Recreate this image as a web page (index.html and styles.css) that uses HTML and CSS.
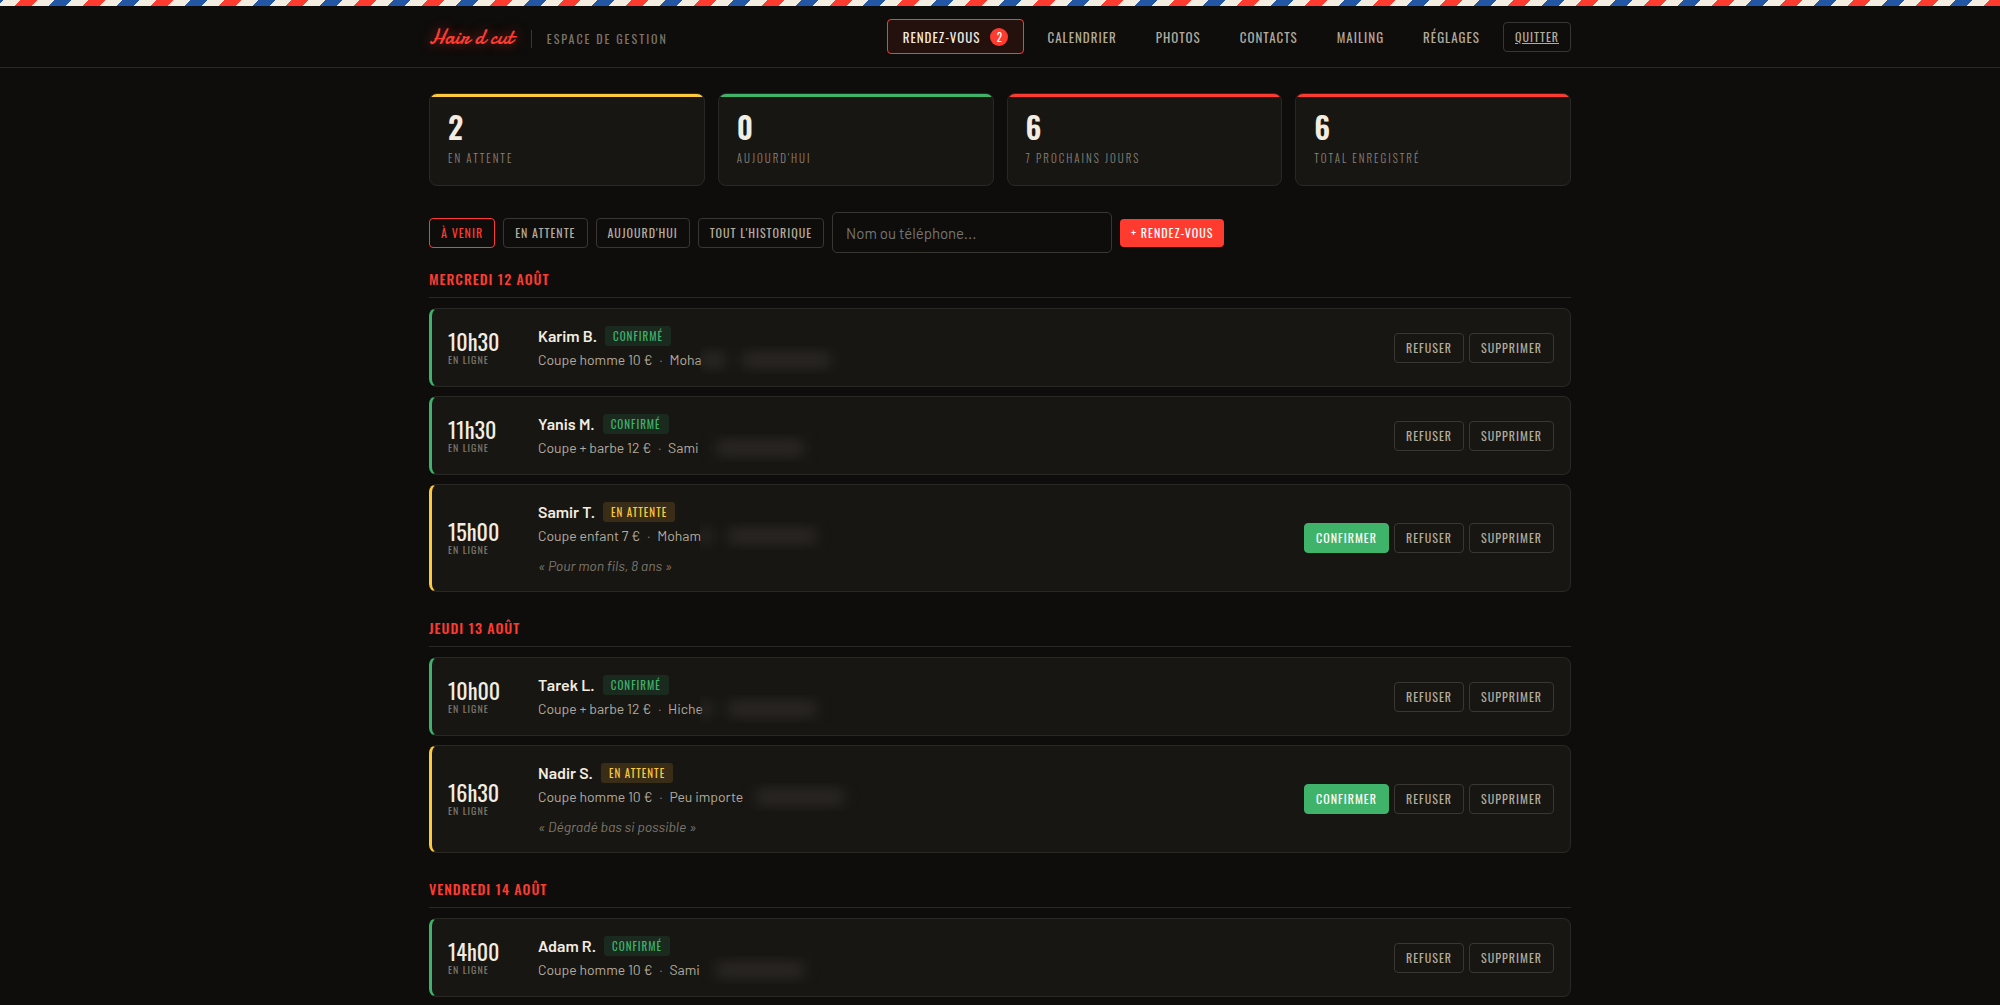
FILE: index.html
```html
<!DOCTYPE html>
<html lang="fr">
<head>
    <meta charset="UTF-8">
    <meta name="viewport" content="width=device-width, initial-scale=1.0">
    <title>Hair d cut - Espace de gestion</title>
    <link rel="stylesheet" href="styles.css">
</head>
<body>
    <div class="barber"></div>

    <header class="topbar">
        <div class="wrap topbar-inner">
            <div class="brand">
                <a class="logo" href="#">Hair d cut</a>
                <span class="logo-sub">Espace de gestion</span>
            </div>
            <nav class="nav">
                <a class="nav-link active" href="#">Rendez-vous <span class="count">2</span></a>
                <a class="nav-link" href="#">Calendrier</a>
                <a class="nav-link" href="#">Photos</a>
                <a class="nav-link" href="#">Contacts</a>
                <a class="nav-link" href="#">Mailing</a>
                <a class="nav-link" href="#">Réglages</a>
                <a class="btn" href="#">Quitter</a>
            </nav>
        </div>
    </header>

    <main class="wrap">
        <!-- Statistiques -->
        <section class="stats">
            <div class="stat stat-wait"><strong>2</strong><span>En attente</span></div>
            <div class="stat stat-ok"><strong>0</strong><span>Aujourd'hui</span></div>
            <div class="stat"><strong>6</strong><span>7 prochains jours</span></div>
            <div class="stat"><strong>6</strong><span>Total enregistré</span></div>
        </section>

        <!-- Filtres -->
        <div class="filters">
            <button class="btn selected" type="button">À venir</button>
            <button class="btn" type="button">En attente</button>
            <button class="btn" type="button">Aujourd'hui</button>
            <button class="btn" type="button">Tout l'historique</button>
            <input class="search" type="search" placeholder="Nom ou téléphone..." aria-label="Nom ou téléphone">
            <button class="btn btn-red" type="button">+ Rendez-vous</button>
        </div>

        <section class="day">
            <h2>Mercredi 12 août</h2>
            <article class="rdv">
                <div class="time"><strong>10h30</strong><span>En ligne</span></div>
                <div class="info">
                    <div class="who"><strong>Karim B.</strong><span class="badge">Confirmé</span></div>
                    <div class="what"><p>Coupe homme 10 €<span class="sep">·</span>Moha</p><span class="hidden-tel with-name"></span></div>
                </div>
                <div class="actions">
                    <button class="btn" type="button">Refuser</button>
                    <button class="btn" type="button">Supprimer</button>
                </div>
            </article>
            <article class="rdv">
                <div class="time"><strong>11h30</strong><span>En ligne</span></div>
                <div class="info">
                    <div class="who"><strong>Yanis M.</strong><span class="badge">Confirmé</span></div>
                    <div class="what"><p>Coupe + barbe 12 €<span class="sep">·</span>Sami</p><span class="hidden-tel"></span></div>
                </div>
                <div class="actions">
                    <button class="btn" type="button">Refuser</button>
                    <button class="btn" type="button">Supprimer</button>
                </div>
            </article>
            <article class="rdv waiting">
                <div class="time"><strong>15h00</strong><span>En ligne</span></div>
                <div class="info">
                    <div class="who"><strong>Samir T.</strong><span class="badge">En attente</span></div>
                    <div class="what"><p>Coupe enfant 7 €<span class="sep">·</span>Moham</p><span class="hidden-tel with-end"></span></div>
                    <p class="note">« Pour mon fils, 8 ans »</p>
                </div>
                <div class="actions">
                    <button class="btn btn-green" type="button">Confirmer</button>
                    <button class="btn" type="button">Refuser</button>
                    <button class="btn" type="button">Supprimer</button>
                </div>
            </article>
        </section>

        <section class="day">
            <h2>Jeudi 13 août</h2>
            <article class="rdv">
                <div class="time"><strong>10h00</strong><span>En ligne</span></div>
                <div class="info">
                    <div class="who"><strong>Tarek L.</strong><span class="badge">Confirmé</span></div>
                    <div class="what"><p>Coupe + barbe 12 €<span class="sep">·</span>Hiche</p><span class="hidden-tel with-end"></span></div>
                </div>
                <div class="actions">
                    <button class="btn" type="button">Refuser</button>
                    <button class="btn" type="button">Supprimer</button>
                </div>
            </article>
            <article class="rdv waiting">
                <div class="time"><strong>16h30</strong><span>En ligne</span></div>
                <div class="info">
                    <div class="who"><strong>Nadir S.</strong><span class="badge">En attente</span></div>
                    <div class="what wide"><p>Coupe homme 10 €<span class="sep">·</span>Peu importe</p><span class="hidden-tel"></span></div>
                    <p class="note">« Dégradé bas si possible »</p>
                </div>
                <div class="actions">
                    <button class="btn btn-green" type="button">Confirmer</button>
                    <button class="btn" type="button">Refuser</button>
                    <button class="btn" type="button">Supprimer</button>
                </div>
            </article>
        </section>

        <section class="day">
            <h2>Vendredi 14 août</h2>
            <article class="rdv">
                <div class="time"><strong>14h00</strong><span>En ligne</span></div>
                <div class="info">
                    <div class="who"><strong>Adam R.</strong><span class="badge">Confirmé</span></div>
                    <div class="what"><p>Coupe homme 10 €<span class="sep">·</span>Sami</p><span class="hidden-tel"></span></div>
                </div>
                <div class="actions">
                    <button class="btn" type="button">Refuser</button>
                    <button class="btn" type="button">Supprimer</button>
                </div>
            </article>
        </section>
    </main>
</body>
</html>
```
FILE: styles.css
```css
* {
    margin: 0;
    padding: 0;
    box-sizing: border-box;
}

:root {
    --bg: #0e0d0b;
    --card: #171613;
    --line: #2a2825;
    --line-strong: #3a3632;
    --cream: #f3ece0;
    --text: #b3ab9d;
    --muted: #7d766b;
    --red: #ff3b30;
    --blue: #2456a6;
    --green: #40b36b;
    --yellow: #ffc93c;
    --title: "Oswald", "Roboto Condensed", "Roboto", sans-serif;
    --body: "Barlow", "Roboto", sans-serif;
}

body {
    font-family: var(--body);
    font-size: 16px;
    line-height: 24px;
    background: var(--bg);
    color: var(--cream);
}

.wrap {
    max-width: 1182px;
    margin: 0 auto;
    padding: 0 20px;
}

/* Bande barbier */
.barber {
    height: 6px;
    background: repeating-linear-gradient(-45deg,
        var(--red) 0 12px,
        var(--cream) 12px 24px,
        var(--blue) 24px 36px,
        var(--cream) 36px 48px);
}

/* En-tête */
.topbar {
    border-bottom: 1px solid var(--line);
}

.topbar-inner {
    display: flex;
    align-items: center;
    height: 61px;
}

.brand {
    display: flex;
    align-items: baseline;
    gap: 18px;
}

.logo {
    font-family: "Damion", "Lato", cursive;
    font-size: 22px;
    color: var(--red);
    text-decoration: none;
    text-shadow: 0 0 12px rgba(255, 59, 48, 0.5);
}

.logo-sub {
    padding-left: 15px;
    border-left: 1px solid var(--line-strong);
    font-family: var(--title);
    font-size: 12px;
    line-height: 18px;
    letter-spacing: 2px;
    text-transform: uppercase;
    color: var(--muted);
}

.nav {
    display: flex;
    align-items: center;
    gap: 7px;
    margin-left: auto;
}

.nav-link {
    display: flex;
    align-items: center;
    gap: 10px;
    height: 35px;
    padding: 0 15px;
    border: 1px solid transparent;
    border-radius: 4px;
    font-family: var(--title);
    font-size: 13px;
    letter-spacing: 1px;
    text-transform: uppercase;
    text-decoration: none;
    color: var(--text);
}

.nav-link.active {
    border-color: var(--red);
    background: #24110e;
    color: var(--cream);
}

.count {
    min-width: 18px;
    border-radius: 9px;
    background: var(--red);
    color: #fff;
    font-size: 11px;
    line-height: 18px;
    letter-spacing: 0;
    text-align: center;
}

/* Boutons */
.btn {
    height: 30px;
    padding: 0 11px;
    border: 1px solid var(--line-strong);
    border-radius: 4px;
    background: transparent;
    font-family: var(--title);
    font-size: 12px;
    line-height: 28px;
    letter-spacing: 1px;
    text-transform: uppercase;
    color: var(--text);
    cursor: pointer;
}

.btn:hover {
    color: var(--cream);
}

.btn.selected {
    border-color: var(--red);
    color: var(--red);
}

.btn-red {
    height: 28px;
    border: none;
    background: var(--red);
    color: #fff;
    line-height: 28px;
}

.btn-green {
    border-color: var(--green);
    background: var(--green);
    color: #fff;
}

/* Statistiques */
.stats {
    display: grid;
    grid-template-columns: repeat(4, 1fr);
    gap: 13px;
    margin-top: 25px;
}

.stat {
    padding: 14px 18px 17px;
    border: 1px solid var(--line);
    border-radius: 8px;
    background: linear-gradient(var(--red), var(--red)) top / 100% 3px no-repeat var(--card);
}

.stat-wait {
    background-image: linear-gradient(var(--yellow), var(--yellow));
}

.stat-ok {
    background-image: linear-gradient(var(--green), var(--green));
}

.stat strong,
.stat span {
    display: block;
    font-family: var(--title);
}

.stat strong {
    font-size: 30px;
    font-weight: 600;
    line-height: 38px;
}

.stat span {
    margin-top: 2px;
    font-size: 11px;
    font-weight: 300;
    line-height: 20px;
    letter-spacing: 2px;
    text-transform: uppercase;
    color: #8a8275;
}

/* Filtres */
.filters {
    display: flex;
    align-items: center;
    gap: 8px;
    margin-top: 26px;
}

.search {
    width: 280px;
    height: 41px;
    padding: 0 13px;
    border: 1px solid var(--line-strong);
    border-radius: 5px;
    background: transparent;
    font-family: var(--body);
    font-size: 15px;
    color: var(--cream);
}

.search::placeholder {
    color: #757575;
}

/* Rendez-vous par jour */
.day {
    margin-bottom: 24px;
}

.day h2 {
    margin: 14px 0 10px;
    padding-bottom: 6px;
    border-bottom: 1px solid var(--line);
    font-family: var(--title);
    font-size: 14px;
    font-weight: 500;
    line-height: 24px;
    letter-spacing: 1px;
    text-transform: uppercase;
    color: var(--red);
}

.rdv {
    display: flex;
    align-items: center;
    gap: 16px;
    margin-bottom: 9px;
    padding: 14px 16px;
    border: 1px solid var(--line);
    border-left: 3px solid var(--green);
    border-radius: 8px;
    background: var(--card);
}

.rdv.waiting {
    border-left-color: var(--yellow);
}

.time {
    width: 74px;
    font-family: var(--title);
}

.time strong,
.time span {
    display: block;
}

.time strong {
    font-size: 22px;
    font-weight: 400;
    line-height: 24px;
}

.time span {
    font-size: 10px;
    line-height: 14px;
    letter-spacing: 1px;
    text-transform: uppercase;
    color: var(--muted);
}

.info {
    flex: 1;
    padding-top: 2px;
}

.who {
    display: flex;
    align-items: center;
    gap: 8px;
    height: 22px;
}

.who strong {
    font-size: 16px;
    font-weight: 600;
}

.badge {
    padding: 0 8px;
    border-radius: 3px;
    background: #1b2a1f;
    font-family: var(--title);
    font-size: 11px;
    line-height: 20px;
    letter-spacing: 1px;
    text-transform: uppercase;
    color: var(--green);
}

.waiting .badge {
    background: #3a2d17;
    color: var(--yellow);
}

.what {
    display: flex;
    align-items: center;
    height: 25px;
    font-size: 14px;
    color: var(--text);
}

.what p {
    width: 162px;
    white-space: nowrap;
}

.what.wide p {
    width: 202px;
}

.sep {
    margin: 0 7px;
    color: var(--muted);
}

/* Numéro masqué */
.hidden-tel {
    display: flex;
    align-items: center;
    width: 140px;
    height: 28px;
    overflow: hidden;
}

.hidden-tel::after {
    content: "";
    width: 88px;
    height: 14px;
    margin-left: 16px;
    background: #2e2a27;
    filter: blur(7px);
}

.hidden-tel.with-name::before,
.hidden-tel.with-end::before {
    content: "";
    width: 26px;
    height: 14px;
    background: #2e2a27;
    filter: blur(7px);
}

.hidden-tel.with-end::before {
    width: 12px;
}

.note {
    margin-top: 7px;
    font-size: 14px;
    font-style: italic;
    line-height: 22px;
    color: var(--muted);
}

.actions {
    display: flex;
    gap: 5px;
}
```
